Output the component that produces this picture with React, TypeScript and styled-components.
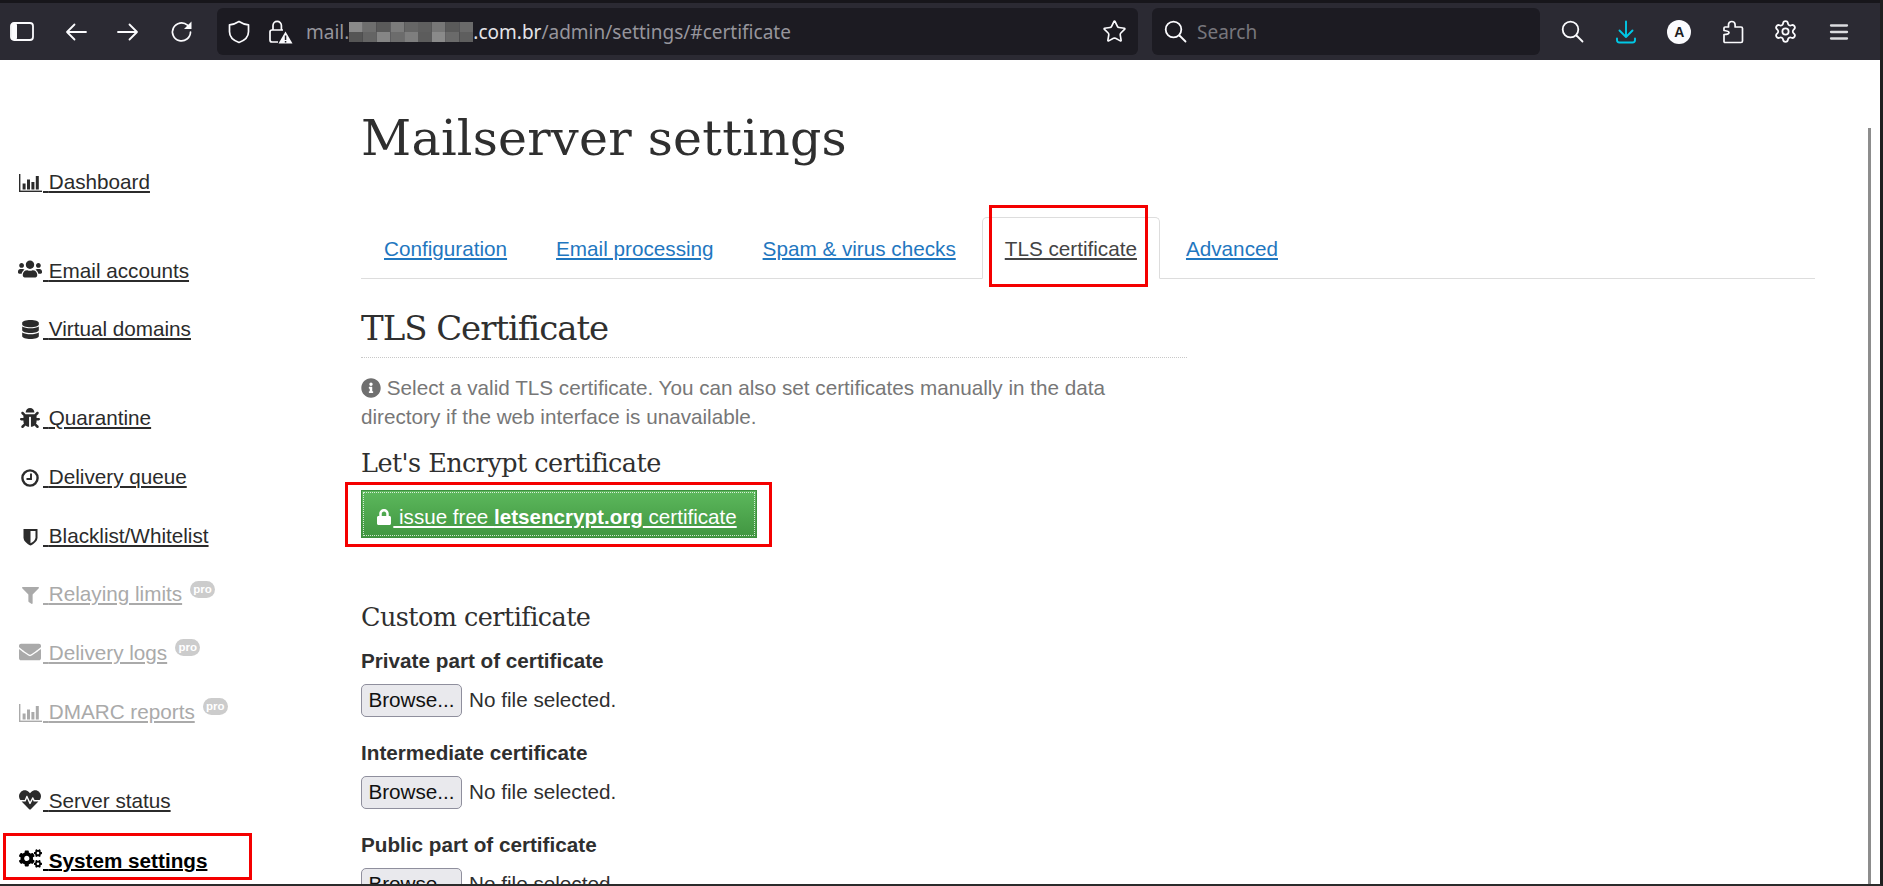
import React from "react";
import styled, { createGlobalStyle } from "styled-components";
import { Settings, Star } from "lucide-react";
import { FaUsers, FaDatabase, FaBug, FaFilter, FaEnvelope, FaHeartbeat, FaCogs, FaLock, FaInfoCircle } from "react-icons/fa";

const Global = createGlobalStyle`
  html, body { margin: 0; padding: 0; height: 100%; overflow: hidden; background: #fff; }
  * { box-sizing: border-box; }
`;

const Frame = styled.div`
  position: relative;
  width: 1883px;
  height: 886px;
  overflow: hidden;
  display: flex;
  flex-direction: column;
  background: #fff;
  border-right: 3px solid #1f1f1f;
  border-bottom: 2px solid #2b2b2b;
  font-family: "Liberation Sans", Arial, sans-serif;
  font-size: 20.7px;
  color: #2f2f2f;
`;

const Toolbar = styled.header`
  flex: 0 0 60px;
  height: 60px;
  display: flex;
  align-items: center;
  background: #2b2a33;
  border-top: 3px solid #17161b;
  color: #fbfbfe;
`;

const Slot = styled.span<{ $w: number }>`
  flex: 0 0 ${(p) => p.$w}px;
  width: ${(p) => p.$w}px;
  display: flex;
  align-items: center;
  justify-content: center;
  color: #fbfbfe;
`;

const UrlBox = styled.div`
  flex: 0 0 921px;
  height: 47px;
  margin-left: 3px;
  display: flex;
  align-items: center;
  background: #1c1b22;
  border-radius: 6px;
  font-family: "Noto Sans", sans-serif;
  font-size: 19px;
  color: #96959c;
`;

const UrlText = styled.span`
  margin-left: 7px;
  display: flex;
  align-items: center;
  white-space: nowrap;
`;

const UrlHost = styled.span`
  color: #e4e4e8;
`;

const StarSlot = styled(Slot)`
  margin-left: auto;
`;

const SearchBox = styled.div`
  flex: 0 0 388px;
  height: 47px;
  margin-left: 14px;
  display: flex;
  align-items: center;
  background: #1c1b22;
  border-radius: 6px;
  font-family: "Noto Sans", sans-serif;
  font-size: 19px;
  color: #77767c;
`;

const SearchWord = styled.span`
  margin-left: -1px;
`;

const RightTools = styled.div`
  display: flex;
  align-items: center;
  margin-left: 6px;
`;

const AccountBadge = styled.span`
  width: 24px;
  height: 24px;
  border-radius: 50%;
  background: #fbfbfe;
  color: #1c1b22;
  font-family: "Liberation Sans", sans-serif;
  font-weight: 700;
  font-size: 14px;
  display: flex;
  align-items: center;
  justify-content: center;
`;

const Page = styled.div`
  flex: 1;
  min-height: 0;
  display: flex;
`;

const Sidebar = styled.nav`
  flex: 0 0 361px;
  padding-top: 92.4px;
  padding-left: 17px;
`;

const NavGroup = styled.div`
  & + & {
    margin-top: 30px;
  }
`;

const NavRow = styled.div`
  height: 58.8px;
  display: flex;
  align-items: center;
  white-space: nowrap;
`;

const NavLink = styled.a<{ $muted?: boolean; $active?: boolean }>`
  color: ${(p) => (p.$active ? "#000" : p.$muted ? "#aaaaaa" : "#2b2b2b")};
  font-weight: ${(p) => (p.$active ? 700 : 400)};
  text-decoration: underline;
  text-underline-offset: 2px;
  text-decoration-thickness: 1.5px;
`;

const IconCell = styled.span`
  display: inline-flex;
  width: 26px;
  height: 22px;
  align-items: center;
  justify-content: center;
  vertical-align: -3px;
`;

const ProBadge = styled.span`
  margin-left: 8px;
  margin-bottom: 11px;
  width: 25px;
  height: 17px;
  border-radius: 9px;
  background: #cccccc;
  color: #fff;
  font-size: 11.5px;
  font-weight: 700;
  line-height: 16px;
  text-align: center;
`;

const Main = styled.main`
  flex: 1;
  min-width: 0;
  padding: 49px 65px 0 0;
`;

const Title = styled.h1`
  margin: 0;
  font-family: "DejaVu Serif", serif;
  font-weight: 400;
  font-size: 49px;
  letter-spacing: 0.25px;
  line-height: 60px;
  color: #2f2f2f;
`;

const Tabs = styled.div`
  margin-top: 48px;
  height: 62px;
  display: flex;
  gap: 3px;
  border-bottom: 1px solid #dddddd;
`;

const Tab = styled.a<{ $active?: boolean }>`
  height: 62px;
  padding: 1px 22px 0;
  display: flex;
  align-items: center;
  border: 1px solid ${(p) => (p.$active ? "#dddddd" : "transparent")};
  border-bottom-color: ${(p) => (p.$active ? "#fff" : "transparent")};
  border-radius: 5px 5px 0 0;
  background: ${(p) => (p.$active ? "#fff" : "transparent")};
  color: ${(p) => (p.$active ? "#444" : "#1f77c0")};
  text-decoration: underline;
  text-underline-offset: 2px;
`;

const Section = styled.section`
  width: 826px;
`;

const SectionTitle = styled.h2`
  margin: 29px 0 0;
  padding-bottom: 9px;
  height: 50px;
  border-bottom: 1px dotted #c8c8c8;
  font-family: "DejaVu Serif", serif;
  font-weight: 400;
  font-size: 34px;
  letter-spacing: -1.05px;
  line-height: 40px;
  color: #2f2f2f;
`;

const Help = styled.p`
  margin: 15px 0 0;
  color: #777777;
  line-height: 29px;
`;

const HelpIcon = styled.span`
  display: inline-flex;
  vertical-align: -3px;
  color: #6f6f6f;
`;

const SubTitle = styled.h3<{ $gap: number }>`
  margin: ${(p) => p.$gap}px 0 0;
  font-family: "DejaVu Serif", serif;
  font-weight: 400;
  font-size: 25.5px;
  letter-spacing: -0.55px;
  line-height: 34px;
  color: #2f2f2f;
`;

const IssueButton = styled.a`
  margin-top: 9.6px;
  width: 396px;
  height: 48px;
  padding: 6px 6px 0 0;
  display: flex;
  align-items: center;
  justify-content: center;
  background: linear-gradient(to bottom, #5cb85c, #419641);
  border: 1px solid #3e8f3e;
  outline: 1px dotted rgba(255, 255, 255, 0.75);
  outline-offset: -3px;
  color: #fff;
  font-size: 20.6px;
  white-space: pre;
  text-decoration: underline;
  text-underline-offset: 2px;
`;

const LockIcon = styled.span`
  display: inline-flex;
  width: 18px;
  justify-content: center;
`;

const FieldLabel = styled.label<{ $first?: boolean }>`
  display: block;
  margin-top: ${(p) => (p.$first ? 13 : 22)}px;
  font-weight: 700;
  line-height: 28px;
`;

const FileRow = styled.div`
  margin-top: 9px;
  height: 33px;
  display: flex;
  align-items: center;
  gap: 7px;
`;

const BrowseButton = styled.button`
  width: 101px;
  height: 33px;
  padding: 0;
  background: #e9e9ed;
  border: 1px solid #8f8f9d;
  border-radius: 5px;
  font: inherit;
  color: #111;
`;

const Scrollbar = styled.div`
  position: absolute;
  left: 1868px;
  top: 128px;
  bottom: 0;
  width: 3px;
  background: #8d8d8d;
`;

const Callout = styled.div<{ $x: number; $y: number; $w: number; $h: number }>`
  position: absolute;
  left: ${(p) => p.$x}px;
  top: ${(p) => p.$y}px;
  width: ${(p) => p.$w}px;
  height: ${(p) => p.$h}px;
  border: 3px solid #f40000;
  pointer-events: none;
`;

const ChartIcon = () => (
  <svg width="23" height="18" viewBox="0 0 23 18" fill="currentColor">
    <rect x="0" y="0" width="1.4" height="18" />
    <rect x="0" y="16.6" width="23" height="1.4" />
    <rect x="3.6" y="9.5" width="3" height="6" />
    <rect x="8" y="5.5" width="3" height="10" />
    <rect x="12.4" y="8" width="3" height="7.5" />
    <rect x="16.8" y="2" width="3" height="13.5" />
  </svg>
);

const ClockIcon = () => (
  <svg width="18" height="18" viewBox="0 0 18 18" fill="none" stroke="currentColor">
    <circle cx="9" cy="9" r="7.6" strokeWidth="2.4" />
    <path d="M10 4.5V10H5.5" strokeWidth="1.9" />
  </svg>
);

const HalfShieldIcon = () => (
  <svg width="15" height="18" viewBox="0 0 15 18">
    <path d="M0.5 1h14v8.5c0 3.8-3.8 6.5-7 8-3.2-1.5-7-4.2-7-8z" fill="currentColor" />
    <path d="M7.5 3h5v6.5c0 2.6-2.5 4.6-5 5.8z" fill="#fff" />
  </svg>
);

const SidebarToggle = () => (
  <svg width="24" height="19" viewBox="0 0 24 19" fill="none" stroke="currentColor">
    <rect x="1" y="1" width="22" height="17" rx="3" strokeWidth="1.8" />
    <rect x="1.5" y="1.5" width="5.5" height="16" rx="1.5" fill="currentColor" stroke="none" />
  </svg>
);

const BackIcon = () => (
  <svg width="22" height="18" viewBox="0 0 22 18" fill="none" stroke="currentColor" strokeWidth="1.8" strokeLinecap="round" strokeLinejoin="round">
    <path d="M21 9H2M9.5 1.5L2 9l7.5 7.5" />
  </svg>
);

const ForwardIcon = () => (
  <svg width="22" height="18" viewBox="0 0 22 18" fill="none" stroke="currentColor" strokeWidth="1.8" strokeLinecap="round" strokeLinejoin="round">
    <path d="M1 9h19M12.5 1.5L20 9l-7.5 7.5" />
  </svg>
);

const ReloadIcon = () => (
  <svg width="23" height="23" viewBox="0 0 23 23" fill="none" stroke="currentColor">
    <path d="M20.5 12a9 9 0 1 1-3-6.8" strokeWidth="1.7" strokeLinecap="round" />
    <path d="M21.5 1.5v7.5h-7.5z" fill="currentColor" stroke="none" />
  </svg>
);

const ShieldIcon = () => (
  <svg width="22" height="24" viewBox="0 0 22 24" fill="none" stroke="currentColor" strokeWidth="1.7" strokeLinejoin="round">
    <path d="M11 1.5c3 2 6 3 9.5 3.3v7c0 5-3.8 8.7-9.5 10.7C5.3 20.5 1.5 16.8 1.5 11.8v-7C5 4.500 8 3.500 11 1.5z" />
  </svg>
);

const InsecureLock = () => (
  <svg width="25" height="25" viewBox="0 0 25 25" fill="none" stroke="currentColor" strokeWidth="1.7">
    <path d="M10 23H4a2 2 0 0 1-2-2v-8a2 2 0 0 1 2-2h11" />
    <path d="M5 11V6.5a4.2 4.2 0 0 1 8.4 0V11" />
    <path d="M17.5 12.5L24.5 24.5h-14z" fill="#fbfbfe" stroke="none" />
    <rect x="16.8" y="16.5" width="1.5" height="4.5" fill="#1c1b22" stroke="none" />
    <rect x="16.8" y="22" width="1.5" height="1.5" fill="#1c1b22" stroke="none" />
  </svg>
);

const SearchIcon = () => (
  <svg width="23" height="23" viewBox="0 0 23 23" fill="none" stroke="currentColor" strokeWidth="1.8" strokeLinecap="round">
    <circle cx="9.5" cy="9.5" r="7.8" />
    <path d="M15.5 15.5L21.5 21.5" />
  </svg>
);

const DownloadIcon = () => (
  <svg width="22" height="24" viewBox="0 0 22 24" fill="none" stroke="#00c8e6" strokeWidth="1.9" strokeLinecap="round" strokeLinejoin="round">
    <path d="M11 1.5v15M4.500 10.500l6.500 6.500 6.500-6.500" />
    <path d="M2 18.500v1.500a2.500 2.500 0 0 0 2.500 2.500h13a2.500 2.500 0 0 0 2.500-2.500v-1.500" />
  </svg>
);

const PuzzleIcon = () => (
  <svg width="22" height="24" viewBox="0 0 22 24" fill="none" stroke="currentColor" strokeWidth="1.7" strokeLinejoin="round">
    <path d="M2 14.5c2.5 0 5-0.5 5-2s-2.500-1.500-5-2v-2.500a1 1 0 0 1 1-1h3.500v-2.200a3.300 3.300 0 0 1 6.600 0V7H19a1.500 1.500 0 0 1 1.500 1.500V21a1.500 1.500 0 0 1-1.500 1.500H3a1 1 0 0 1-1-1z" />
  </svg>
);

const MenuIcon = () => (
  <svg width="20" height="18" viewBox="0 0 20 18" fill="none" stroke="#dcdce0" strokeWidth="2.3" strokeLinecap="round">
    <path d="M2 2.500h16M2 9h16M2 15.500h16" />
  </svg>
);

const shades = ["#8a8a8a", "#6e6e6e", "#5a5a5a", "#7c7c7c", "#666", "#5f5f5f", "#777", "#5a5a5a", "#6a6a6a",
  "#555", "#646464", "#858585", "#6c6c6c", "#7e7e7e", "#5c5c5c", "#8a8a8a", "#6a6a6a", "#5e5e5e"];

const BlurredHost = () => (
  <svg width="124" height="20" viewBox="0 0 124 20">
    {shades.map((c, i) => (
      <rect key={i} x={(i % 9) * 13.8} y={i < 9 ? 0 : 10} width="13.8" height="10" fill={c} />
    ))}
  </svg>
);

type NavItem = { icon: React.ReactNode; label: string; muted?: boolean; active?: boolean };

const navGroups: NavItem[][] = [
  [{ icon: <ChartIcon />, label: "Dashboard" }],
  [
    { icon: <FaUsers size={24} />, label: "Email accounts" },
    { icon: <FaDatabase size={19} />, label: "Virtual domains" },
  ],
  [
    { icon: <FaBug size={20} />, label: "Quarantine" },
    { icon: <ClockIcon />, label: "Delivery queue" },
    { icon: <HalfShieldIcon />, label: "Blacklist/Whitelist" },
    { icon: <FaFilter size={17} />, label: "Relaying limits", muted: true },
    { icon: <FaEnvelope size={22} />, label: "Delivery logs", muted: true },
    { icon: <ChartIcon />, label: "DMARC reports", muted: true },
  ],
  [
    { icon: <FaHeartbeat size={22} />, label: "Server status" },
    { icon: <FaCogs size={23} />, label: "System settings", active: true },
  ],
];

const tabs = ["Configuration", "Email processing", "Spam & virus checks", "TLS certificate", "Advanced"];
const certFields = ["Private part of certificate", "Intermediate certificate", "Public part of certificate"];

export default function App() {
  return (
    <>
      <Global />
      <Frame>
        <Toolbar>
          <Slot $w={44}><SidebarToggle /></Slot>
          <Slot $w={64}><BackIcon /></Slot>
          <Slot $w={40}><ForwardIcon /></Slot>
          <Slot $w={66}><ReloadIcon /></Slot>
          <UrlBox>
            <Slot $w={44}><ShieldIcon /></Slot>
            <Slot $w={38}><InsecureLock /></Slot>
            <UrlText>
              mail.<BlurredHost /><UrlHost>.com.br</UrlHost>/admin/settings/#certificate
            </UrlText>
            <StarSlot $w={48}><Star size={25} strokeWidth={1.6} /></StarSlot>
          </UrlBox>
          <SearchBox>
            <Slot $w={46}><SearchIcon /></Slot>
            <SearchWord>Search</SearchWord>
          </SearchBox>
          <RightTools>
            <Slot $w={53.3}><SearchIcon /></Slot>
            <Slot $w={53.3}><DownloadIcon /></Slot>
            <Slot $w={53.3}><AccountBadge>A</AccountBadge></Slot>
            <Slot $w={53.3}><PuzzleIcon /></Slot>
            <Slot $w={53.3}><Settings size={25} strokeWidth={1.7} /></Slot>
            <Slot $w={53.3}><MenuIcon /></Slot>
          </RightTools>
        </Toolbar>
        <Page>
          <Sidebar>
            {navGroups.map((group, g) => (
              <NavGroup key={g}>
                {group.map((item) => (
                  <NavRow key={item.label}>
                    <NavLink href="#" $muted={item.muted} $active={item.active}>
                      <IconCell>{item.icon}</IconCell> {item.label}
                    </NavLink>
                    {item.muted && <ProBadge>pro</ProBadge>}
                  </NavRow>
                ))}
              </NavGroup>
            ))}
          </Sidebar>
          <Main>
            <Title>Mailserver settings</Title>
            <Tabs>
              {tabs.map((t) => (
                <Tab key={t} href="#" $active={t === "TLS certificate"}>{t}</Tab>
              ))}
            </Tabs>
            <Section>
              <SectionTitle>TLS Certificate</SectionTitle>
              <Help>
                <HelpIcon><FaInfoCircle size={20} /></HelpIcon> Select a valid TLS certificate. You can also set certificates manually in the data directory if the web interface is unavailable.
              </Help>
              <SubTitle $gap={15.4}>Let's Encrypt certificate</SubTitle>
              <IssueButton href="#">
                <LockIcon><FaLock size={16} /></LockIcon> issue free <b>letsencrypt.org</b> certificate
              </IssueButton>
              <SubTitle $gap={62}>Custom certificate</SubTitle>
              {certFields.map((label, i) => (
                <React.Fragment key={label}>
                  <FieldLabel $first={i === 0}>{label}</FieldLabel>
                  <FileRow>
                    <BrowseButton type="button">Browse...</BrowseButton>
                    <span>No file selected.</span>
                  </FileRow>
                </React.Fragment>
              ))}
            </Section>
          </Main>
        </Page>
        <Scrollbar />
        <Callout $x={3} $y={833} $w={249} $h={47} />
        <Callout $x={989} $y={205} $w={159} $h={82} />
        <Callout $x={345} $y={482} $w={427} $h={65} />
      </Frame>
    </>
  );
}
